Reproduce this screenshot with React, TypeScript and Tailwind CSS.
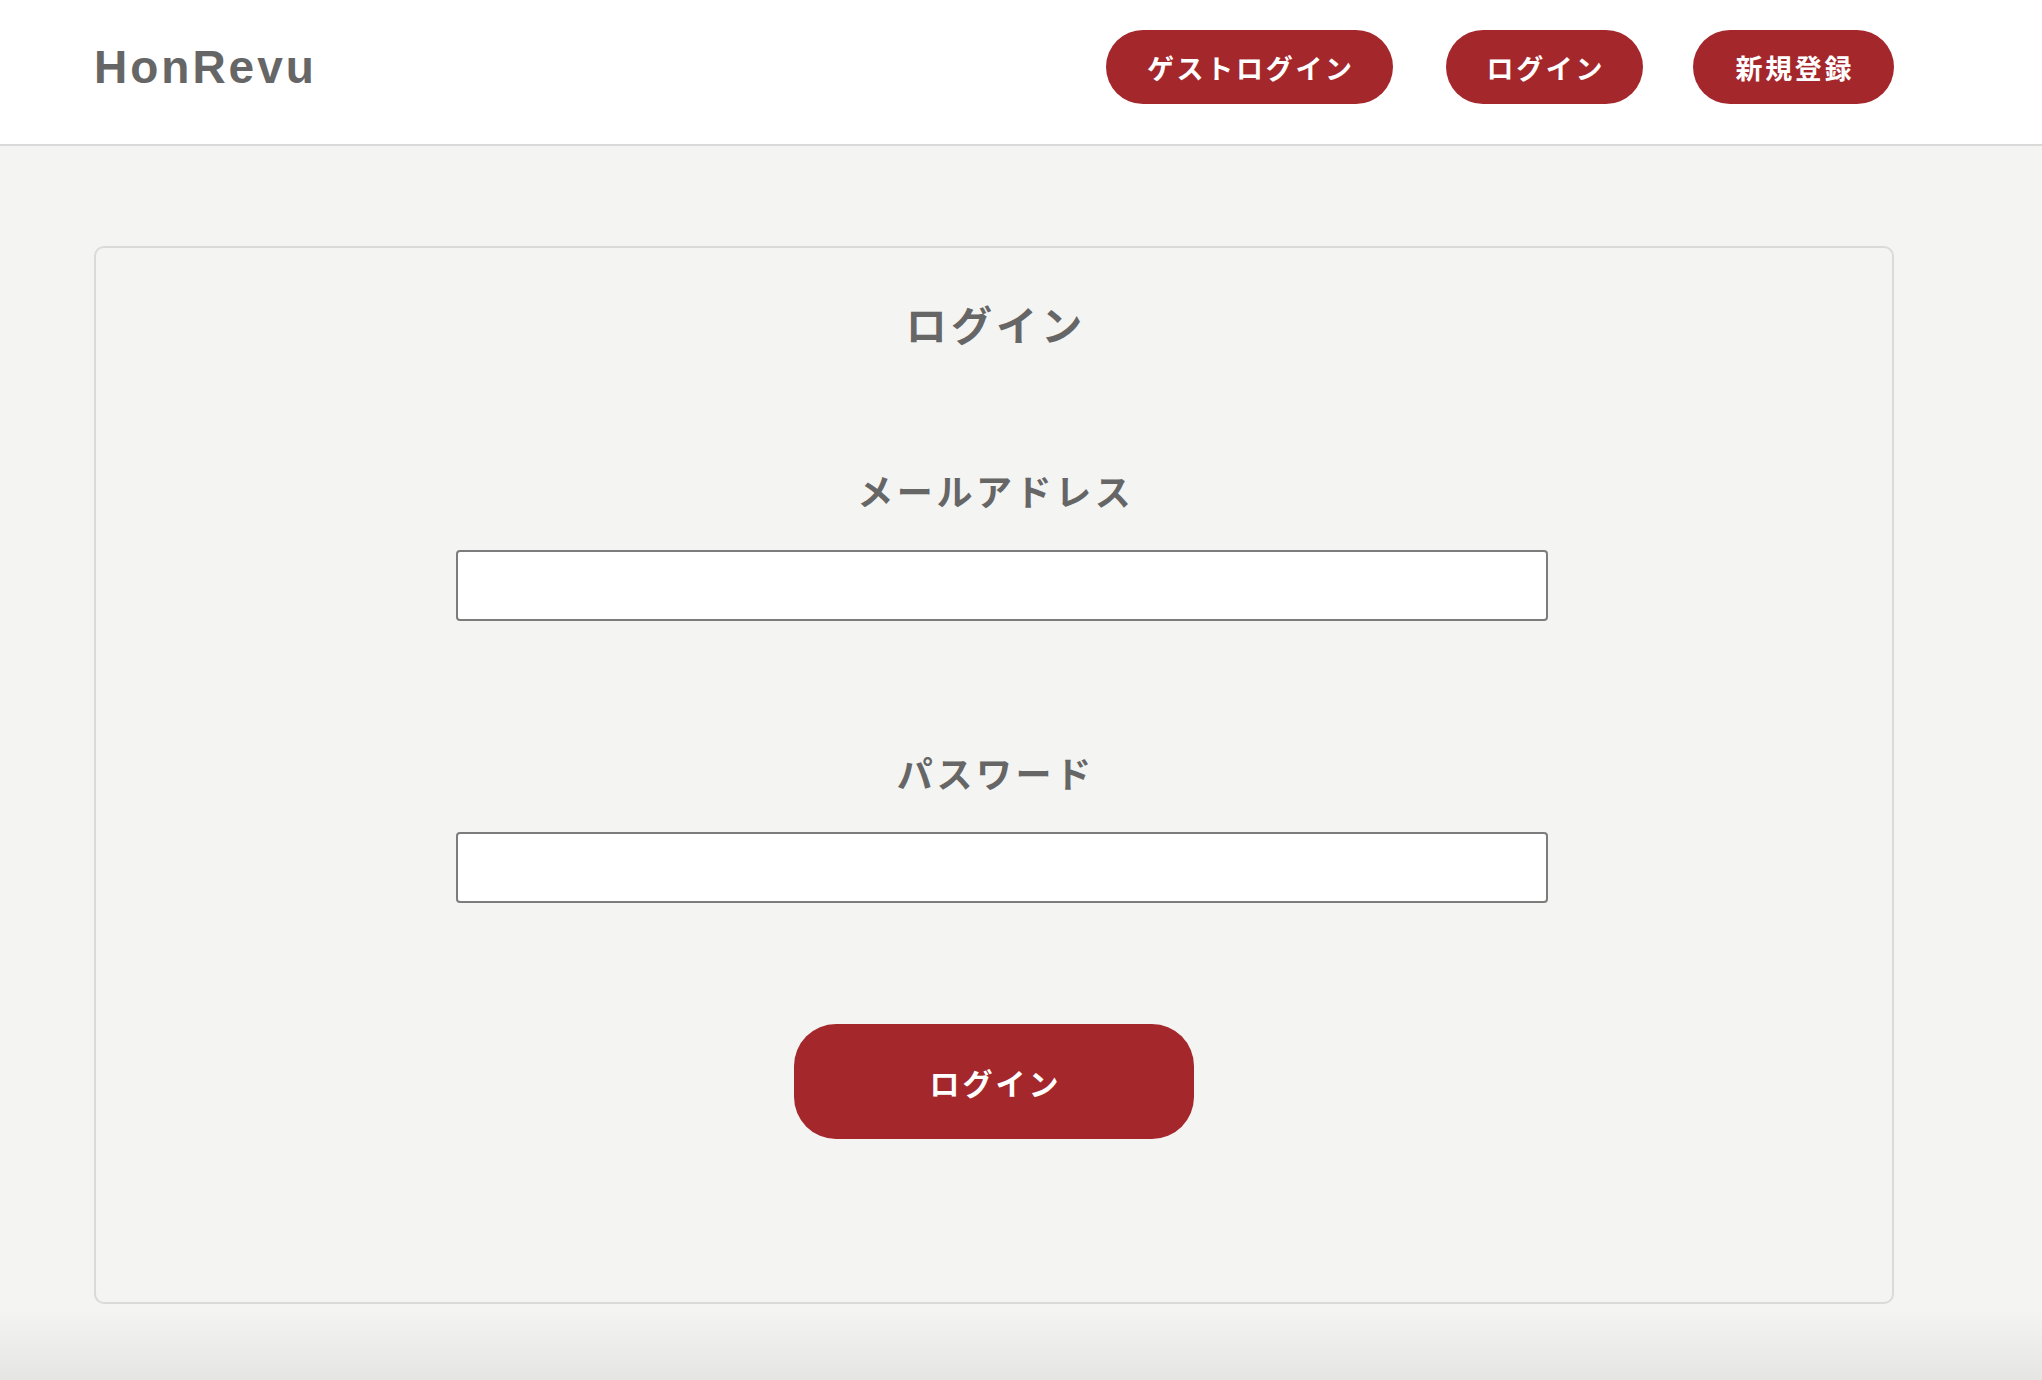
import React from 'react';

const navButtons = [
  { label: "ゲストログイン", width: "w-[287px]", gap: "" },
  { label: "ログイン", width: "w-[197px]", gap: "ml-[53px]" },
  { label: "新規登録", width: "w-[201px]", gap: "ml-[50px]" }
];

function Header() {
  return (
    <header className="bg-white border-b-2 border-[#d9d9d9]">
      <div className="ml-[94px] w-[1800px] h-[144px] pb-[10px] flex items-center justify-between">
        <h1 className="font-['Liberation_Sans',Arial,sans-serif] font-bold text-[46px] leading-none tracking-[0.065em] text-[#666666]">
          HonRevu
        </h1>
        <nav className="flex items-center">
          {navButtons.map((b) => (
            <button
              key={b.label}
              className={`${b.width} ${b.gap} h-[74px] rounded-full bg-[#a4272c] text-white font-bold text-[27px] leading-none tracking-[0.1em] pl-[0.1em] flex items-center justify-center`}
            >
              {b.label}
            </button>
          ))}
        </nav>
      </div>
    </header>
  );
}

function Field({ label, type, first }: { label: string; type: string; first?: boolean }) {
  return (
    <div className={`flex flex-col items-center ${first ? "mt-[128px]" : "mt-[133px]"}`}>
      <label className="text-[36px] leading-[36px] font-bold tracking-[0.1em] pl-[0.1em] text-[#666666]">
        {label}
      </label>
      <input
        type={type}
        className="mt-[42px] ml-[15px] w-[1092px] h-[71px] bg-white border-2 border-[#7c7c7c] rounded-[4px] outline-none px-4 text-[28px]"
      />
    </div>
  );
}

export default function App() {
  return (
    <div className="min-h-[1380px] font-['Noto_Sans_CJK_JP','Noto_Sans',sans-serif] bg-[linear-gradient(to_bottom,#f4f4f2_calc(100%-72px),#e5e5e3)]">
      <Header />
      <main className="pt-[100px]">
        <section className="ml-[94px] w-[1800px] border-2 border-[#dadad8] rounded-[10px] pt-[54px] pb-[163px] flex flex-col items-center">
          <h2 className="text-[41px] leading-[42px] font-bold tracking-[0.1em] pl-[0.1em] text-[#666666]">ログイン</h2>
          <Field label="メールアドレス" type="email" first />
          <Field label="パスワード" type="password" />
          <button className="mt-[121px] w-[400px] h-[115px] rounded-[42px] bg-[#a4272c] text-white font-bold text-[30px] leading-none tracking-[0.1em] pl-[0.1em]">
            ログイン
          </button>
        </section>
      </main>
    </div>
  );
}
